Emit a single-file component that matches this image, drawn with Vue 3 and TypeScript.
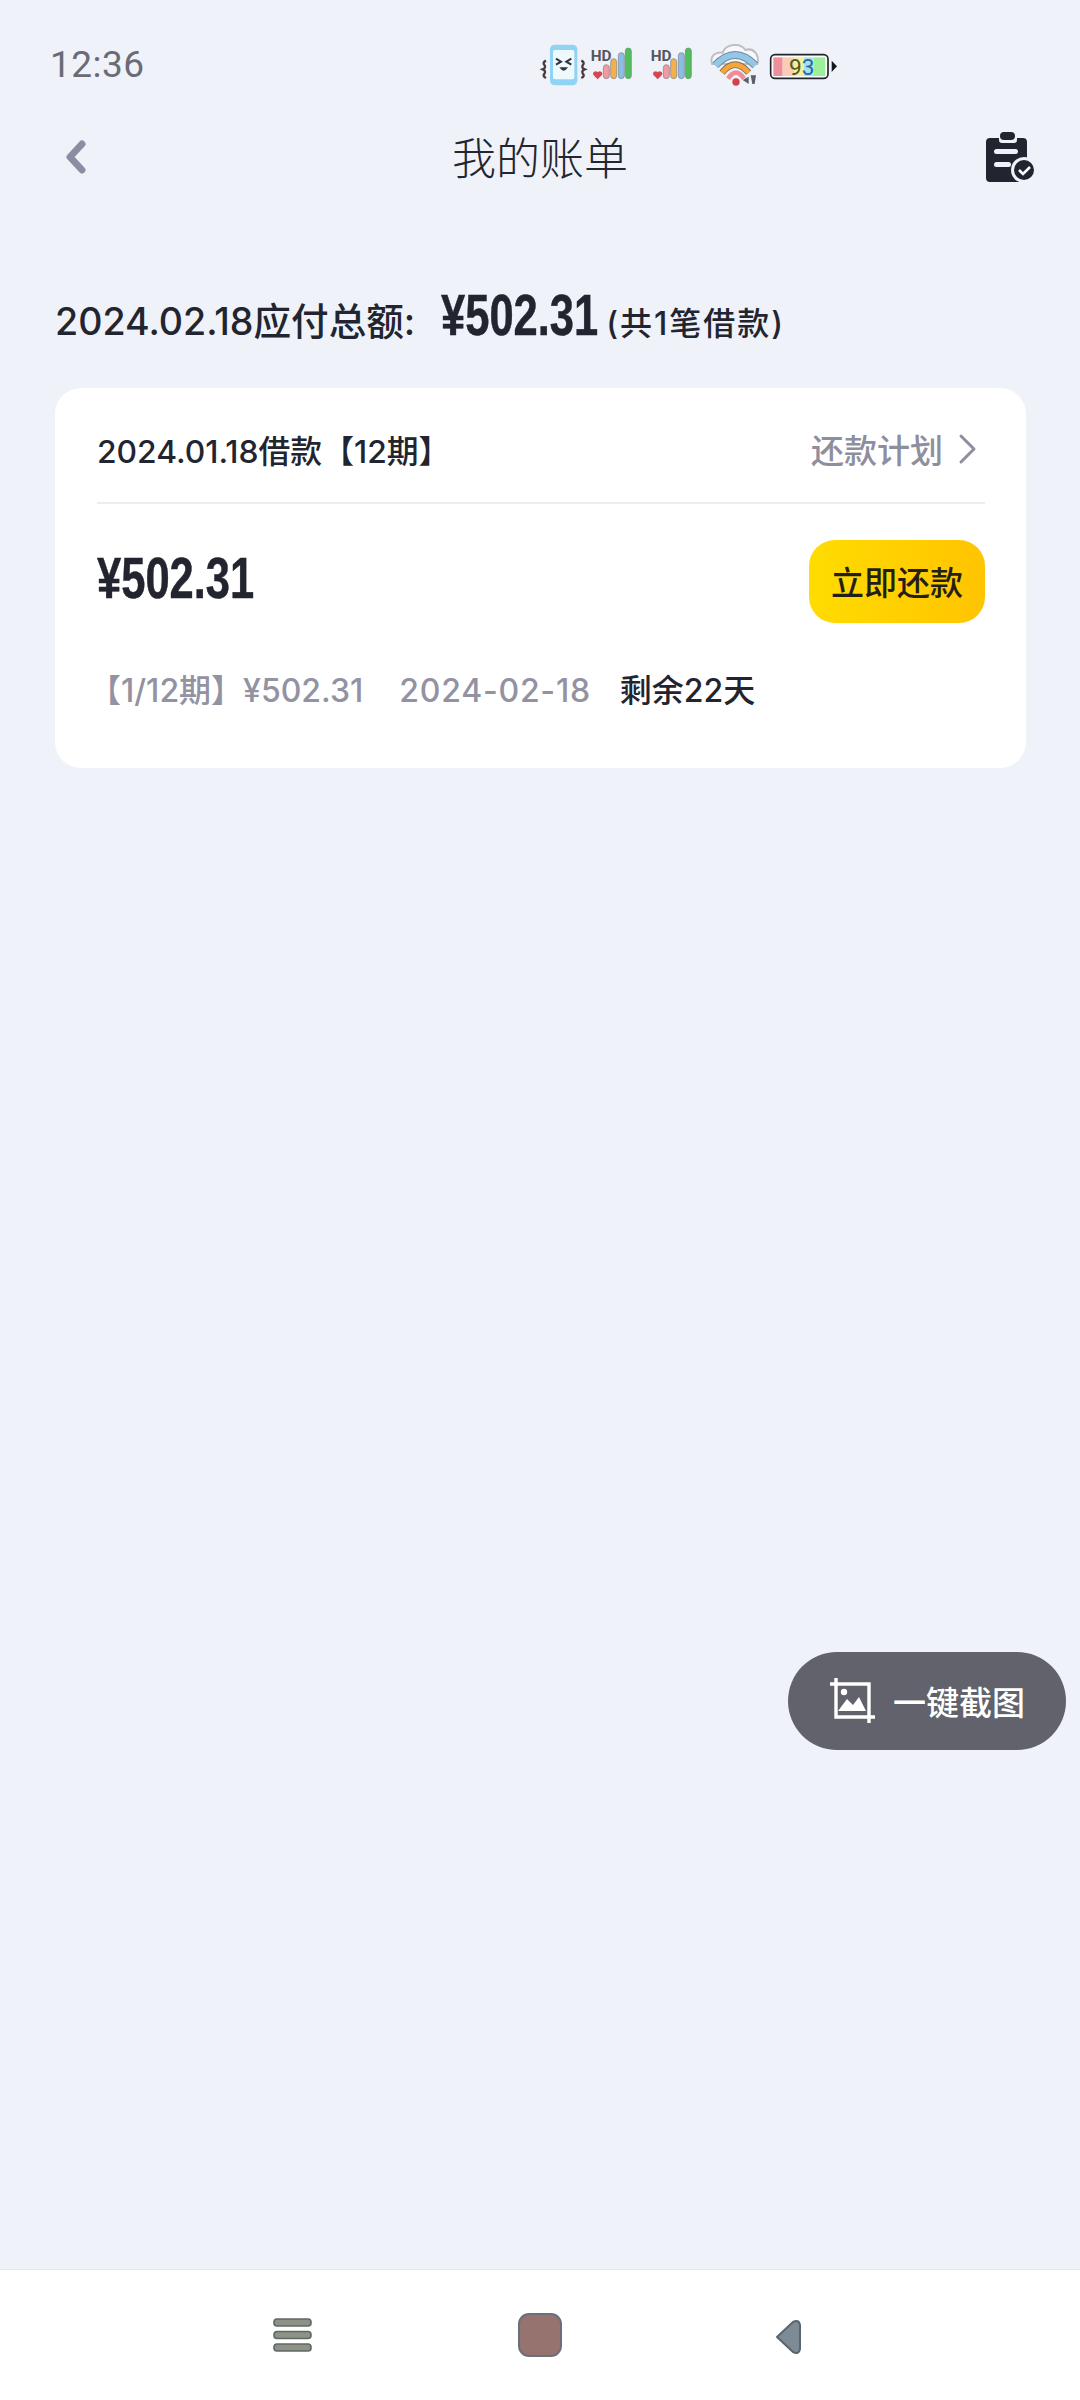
<script setup lang="ts">
const barHeights = [
  { x: 250, y: 128, fill: '#f19aa0' },
  { x: 272, y: 110, fill: '#f5b04a' },
  { x: 295, y: 92, fill: '#8dbde6' },
  { x: 316, y: 78, fill: '#4fbf5a' },
]
const signals = [0, 60]
</script>

<template>
  <div class="page">
    <div class="status">
      <span class="time">12:36</span>
      <svg class="status-icons" width="340" height="80" viewBox="0 0 1020 240">
        <!-- phone -->
        <path d="M78 116q-12 6-4 14 4 8-6 12 10 4 6 12-8 8 4 14" fill="none" stroke="#4a3a40" stroke-width="7" />
        <path d="M184 116q12 6 4 14-4 8 6 12-10 4-6 12 8 8-4 14" fill="none" stroke="#4a3a40" stroke-width="7" />
        <rect x="90" y="68" width="82" height="122" rx="14" fill="#8fd4f5" />
        <rect x="99" y="84" width="64" height="88" rx="6" fill="#eef9fe" />
        <path d="M108 110l15 9-15 9M154 110l-15 9 15 9" fill="none" stroke="#33333c" stroke-width="6" />
        <path d="M118 136q13 20 26 0z" fill="#33333c" />
        <!-- signal -->
        <g v-for="dx in signals" :key="dx" :transform="`translate(${dx * 3} 0)`">
          <text x="212" y="118" class="hd">HD</text>
          <path d="M233 172l-12-12a7.5 7.5 0 0 1 12-9 7.5 7.5 0 0 1 12 9z" fill="#d9444f" />
          <rect
            v-for="b in barHeights"
            :key="b.x"
            :x="b.x"
            :y="b.y"
            width="18"
            :height="170 - b.y"
            rx="9"
            :fill="b.fill"
            stroke="#77808a"
            stroke-width="2"
          />
        </g>
        <!-- wifi -->
        <path d="M576 126c-8-24 12-38 32-34 8-26 54-32 68-8 24-8 44 14 36 42z" fill="#f7f8fb" stroke="#bfbfc4" stroke-width="6" />
        <path d="M586 130Q645 68 706 130" fill="none" stroke="#7d8791" stroke-width="24" />
        <path d="M586 130Q645 68 706 130" fill="none" stroke="#8fc8ea" stroke-width="18" />
        <path d="M606 152Q645 104 686 152" fill="none" stroke="#7d6a55" stroke-width="20" />
        <path d="M606 152Q645 104 686 152" fill="none" stroke="#f4a53c" stroke-width="15" />
        <path d="M624 170Q648 134 672 170" fill="none" stroke="#f08c96" stroke-width="14" />
        <circle cx="648" cy="180" r="11" fill="#d4404c" />
        <path d="M668 174l18-10v22zM692 160h16l-4 26h-7z" fill="#5c5f68" />
        <!-- battery -->
        <rect x="752" y="98" width="172" height="71" rx="13" fill="#fff" stroke="#23242b" stroke-width="5" />
        <rect x="760" y="106" width="28" height="56" fill="#ee8f9c" />
        <rect x="788" y="106" width="34" height="56" fill="#f9cdb6" />
        <rect x="822" y="106" width="30" height="56" fill="#f6ee98" />
        <rect x="852" y="106" width="28" height="56" fill="#a8dff0" />
        <rect x="880" y="106" width="36" height="56" fill="#9cf09c" />
        <path d="M935 116l16 17-16 17z" fill="#15161a" />
        <text x="845" y="158" class="batt" text-anchor="middle"><tspan fill="#4f5a20">9</tspan><tspan fill="#1d6f9e">3</tspan></text>
      </svg>
    </div>

    <header class="nav">
      <svg class="back" width="22" height="34" viewBox="0 0 22 34">
        <path d="M17 4L5 17l12 13" fill="none" stroke="#8b8ea3" stroke-width="7" stroke-linecap="round" stroke-linejoin="round" />
      </svg>
      <h1 class="title">我的账单</h1>
      <svg class="clip" width="52" height="52" viewBox="0 0 52 52">
        <path d="M5 7h9v2q0 3 3 3h12q3 0 3-3V7h6q4 0 4 4v36q0 4-4 4H5q-4 0-4-4V11q0-4 4-4z" fill="#22252f" />
        <rect x="15" y="1" width="15" height="8" rx="4" fill="#22252f" />
        <rect x="9" y="18" width="24" height="5" rx="2.5" fill="#eff2f9" />
        <rect x="9" y="31" width="17" height="5" rx="2.5" fill="#eff2f9" />
        <circle cx="39" cy="39" r="13" fill="#eff2f9" />
        <circle cx="39" cy="39" r="10" fill="#22252f" />
        <path d="M34 39l4 4 7-7" fill="none" stroke="#fff" stroke-width="2.6" />
      </svg>
    </header>

    <main class="content">
      <div class="summary">
        <span class="summary-label">2024.02.18应付总额:</span>
        <span class="amount amount-lg">¥502.31</span>
        <span class="summary-note">(共1笔借款)</span>
      </div>

      <section class="card">
        <div class="card-head">
          <span class="loan">2024.01.18借款【12期】</span>
          <span class="plan">
            还款计划
            <svg width="20" height="32" viewBox="0 0 20 32">
              <path d="M3 3l13 13L3 29" fill="none" stroke="#8e8f9e" stroke-width="3" stroke-linecap="round" stroke-linejoin="round" />
            </svg>
          </span>
        </div>
        <div class="card-body">
          <span class="amount amount-md">¥502.31</span>
          <button class="pay" type="button">立即还款</button>
        </div>
        <div class="card-foot">
          <span class="term">【1/12期】¥502.31</span>
          <span class="date">2024-02-18</span>
          <span class="left">剩余22天</span>
        </div>
      </section>

      <button class="shot" type="button">
        <svg width="48" height="48" viewBox="0 0 48 48">
          <path d="M7 1v39h39M1 7h39v39" fill="none" stroke="#fff" stroke-width="3.4" />
          <circle cx="15" cy="15" r="3.2" fill="#fff" />
          <path d="M9 34l9-12 6 6 6-8 7 14z" fill="#fff" />
        </svg>
        <span>一键截图</span>
      </button>
    </main>

    <footer class="navbar">
      <svg class="nav-menu" width="39" height="34" viewBox="0 0 39 34">
        <rect v-for="y in [1, 13.5, 26]" :key="y" x="1" :y="y" width="37" height="7" rx="3" fill="#8b9387" stroke="#5f6864" stroke-width="1.6" />
      </svg>
      <svg class="nav-home" width="44" height="44" viewBox="0 0 44 44">
        <rect x="1" y="1" width="42" height="42" rx="10" fill="#96736f" stroke="#6b7078" stroke-width="2" />
      </svg>
      <svg class="nav-back" width="27" height="36" viewBox="0 0 27 36">
        <path d="M2 18L18 3q6-3 7 3v24q-1 6-7 3z" fill="#7f8b94" stroke="#5a666e" stroke-width="2" stroke-linejoin="round" />
      </svg>
    </footer>
  </div>
</template>

<style>
body {
  margin: 0;
  background: #eff2f9;
}
</style>

<style scoped>
.page {
  position: relative;
  width: 1080px;
  height: 2400px;
  display: flex;
  flex-direction: column;
  background: #eff2f9;
  color: #22252f;
  font-family: Inter, "Noto Sans CJK SC", sans-serif;
}

.status {
  height: 88px;
  padding: 20px 0 0 50px;
  display: flex;
  align-items: center;
}
.time {
  width: 470px;
  font-family: Roboto, sans-serif;
  font-size: 37px;
  color: #6a6b76;
  letter-spacing: 0.5px;
}
.status-icons {
  margin-top: -4px;
}
.status-icons .hd {
  font: 700 46px Roboto, sans-serif;
  fill: #55565f;
}
.status-icons .batt {
  font: 400 68px Roboto, sans-serif;
}

.nav {
  height: 98px;
  padding: 0 43px;
  display: grid;
  grid-template-columns: 1fr auto 1fr;
  align-items: center;
}
.back {
  margin-left: 22px;
}
.clip {
  justify-self: end;
}
.title {
  margin: -3px 0 0;
  font-size: 44px;
  font-weight: 300;
  color: #23252f;
}

.content {
  flex: 1;
  position: relative;
  padding: 0 54px 0 55px;
}

.summary {
  height: 182px;
  box-sizing: border-box;
  padding: 80px 0 0;
  display: flex;
  align-items: baseline;
}
.summary-label {
  font-size: 37.6px;
  font-weight: 500;
}
.summary-note {
  font-size: 32px;
  font-weight: 500;
  letter-spacing: 2px;
  margin-left: 10px;
}

.amount {
  display: inline-block;
  width: 155px;
  font-family: "Liberation Sans", sans-serif;
  font-size: 58px;
  font-weight: 700;
  line-height: 1;
  white-space: nowrap;
  -webkit-text-stroke: 0.5px #22252f;
  transform: scaleX(0.75);
  transform-origin: left;
}
.amount-lg {
  margin-left: 26px;
}
.amount-md {
  margin-bottom: 6px;
}

.card {
  height: 380px;
  box-sizing: border-box;
  padding: 0 41px 0 42px;
  background: #fff;
  border-radius: 26px;
}
.card-head {
  height: 106px;
  padding-top: 8px;
  display: flex;
  align-items: center;
  justify-content: space-between;
  border-bottom: 2px solid #ecedf2;
}
.loan {
  font-size: 31.8px;
  font-weight: 500;
}
.plan {
  display: flex;
  align-items: center;
  gap: 15px;
  margin-right: 7px;
  font-size: 33px;
  font-weight: 500;
  color: #8e8f9e;
}
.card-body {
  height: 154px;
  display: flex;
  align-items: center;
  justify-content: space-between;
}
.pay {
  width: 176px;
  height: 83px;
  border: 0;
  padding: 0;
  border-radius: 26px;
  background: linear-gradient(90deg, #ffdc00, #ffc400);
  color: #231f16;
  font-family: inherit;
  font-size: 33px;
  font-weight: 500;
}
.card-foot {
  display: flex;
  align-items: baseline;
  margin: 7px 0 0 -8px;
  font-size: 32px;
  font-weight: 500;
  color: #9292a2;
}
.date {
  margin-left: 36px;
  letter-spacing: 0.75px;
}
.left {
  margin-left: 29px;
  color: #22252f;
}

.shot {
  position: absolute;
  right: 14px;
  top: 1446px;
  width: 278px;
  height: 98px;
  border: 0;
  border-radius: 49px;
  background: #61626c;
  color: #fff;
  font-family: inherit;
  font-size: 33px;
  font-weight: 500;
  display: flex;
  align-items: center;
  justify-content: center;
  gap: 16px;
}

.navbar {
  height: 130px;
  border-top: 1px solid #e6e8ee;
  background: #fff;
  display: flex;
  align-items: center;
  padding-left: 273px;
}
.nav-home {
  margin: 0 213px 0 206px;
}
.nav-back {
  margin-top: 4px;
}
</style>
